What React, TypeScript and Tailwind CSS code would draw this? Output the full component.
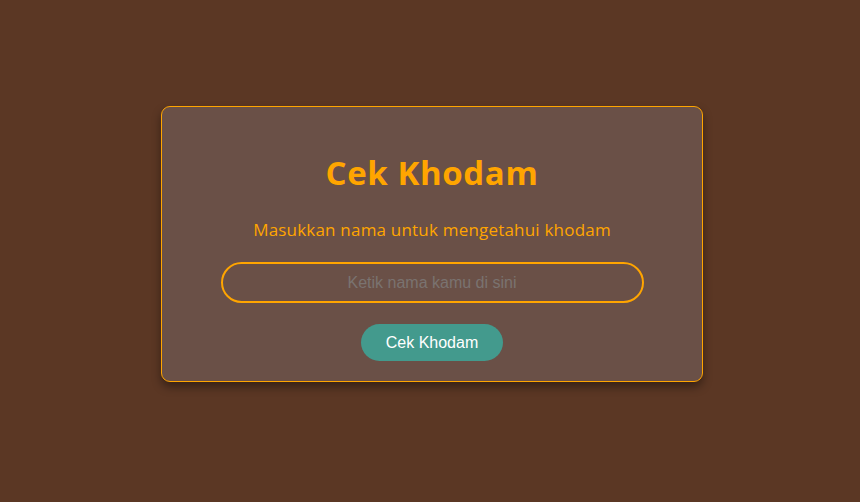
export default function App() {
  return (
    <div className="flex h-[502px] w-full justify-center bg-[#5b3724] pl-[4px] pt-[106px] font-['Open_Sans',sans-serif]">
      <div className="flex h-[276px] w-[542px] flex-col items-center rounded-[9px] border border-[#ffa500] bg-[#6a5047] pt-[42px] shadow-[0_5px_10px_rgba(0,0,0,0.4)]">
        <h1 className="text-[33px] font-bold leading-[48px] tracking-[0.6px] text-[#ffa500]">Cek Khodam</h1>
        <p className="mt-[21px] text-[17px] font-medium leading-6 tracking-[0.2px] text-[#ffa500]">
          Masukkan nama untuk mengetahui khodam
        </p>
        <input
          type="text"
          placeholder="Ketik nama kamu di sini"
          className="mt-[20px] h-[41px] w-[423px] rounded-full border-2 border-[#ffa500] bg-transparent px-4 text-center font-['Liberation_Sans',Arial,sans-serif] text-base text-white outline-none placeholder:text-[#7a7370]"
        />
        <button className="mt-[21px] h-[37px] w-[142px] rounded-full bg-[#439a8d] font-['Liberation_Sans',Arial,sans-serif] text-base text-white">
          Cek Khodam
        </button>
      </div>
    </div>
  )
}
